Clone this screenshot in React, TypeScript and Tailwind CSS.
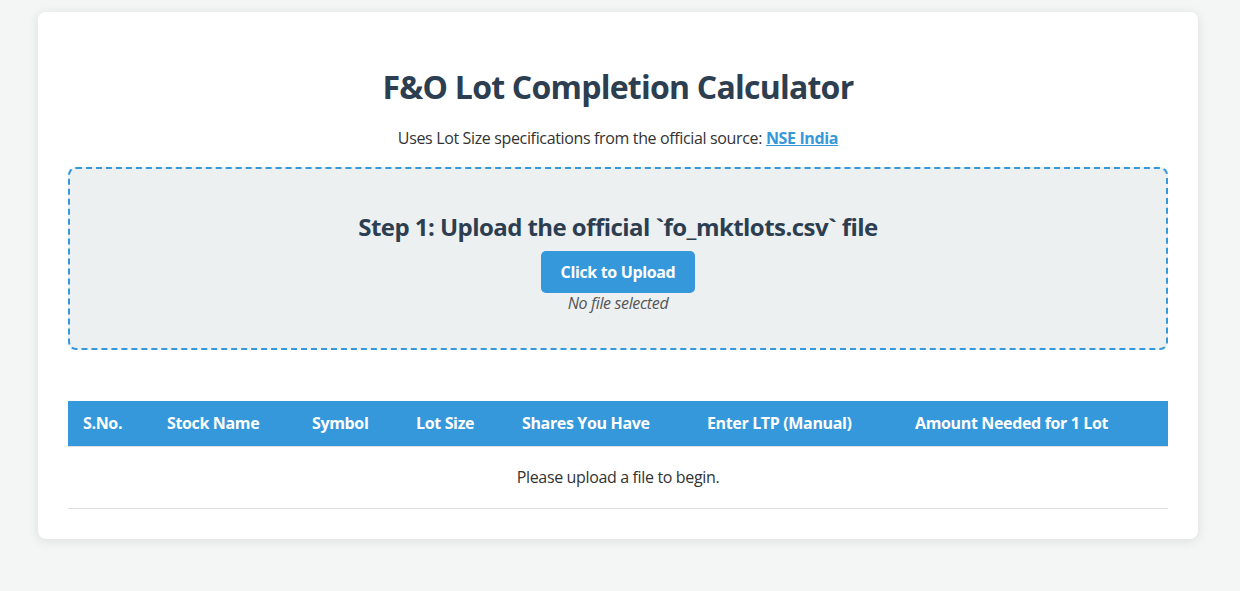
import React from "react";

const cols = [
  { label: "S.No.", w: "w-[84px]" },
  { label: "Stock Name", w: "w-[145px]" },
  { label: "Symbol", w: "w-[104px]" },
  { label: "Lot Size", w: "w-[106px]" },
  { label: "Shares You Have", w: "w-[185px]" },
  { label: "Enter LTP (Manual)", w: "w-[208px]" },
  { label: "Amount Needed for 1 Lot", w: "w-[268px]" },
];

export default function App() {
  return (
    <div className="min-h-[591px] bg-[#f4f5f5] pt-3 pb-12 font-['Open_Sans',sans-serif] tracking-[-0.022em] text-[#333]">
      <div className="ml-[38px] w-[1160px] rounded-lg bg-white p-[30px] shadow-[0_2px_12px_rgba(0,0,0,0.1)]">
        <h1 className="mt-[24px] text-center text-[32px] font-bold leading-[42px] tracking-[-0.024em] text-[#2c3e50]">
          F&amp;O Lot Completion Calculator
        </h1>
        <p className="mt-[20px] text-center text-[16px] leading-[21px]">
          Uses Lot Size specifications from the official source:{" "}
          <a href="#" className="font-bold text-[#3498db] underline">
            NSE India
          </a>
        </p>

        <div className="mt-[18px] flex h-[183px] flex-col items-center rounded-lg border-2 border-dashed border-[#3498db] bg-[#ecf0f1] pt-[42px]">
          <h2 className="text-[24px] font-bold leading-[32px] tracking-[-0.023em] text-[#2c3e50]">
            Step 1: Upload the official `fo_mktlots.csv` file
          </h2>
          <button className="mt-[8px] rounded-[5px] bg-[#3498db] px-5 py-[10px] text-[16px] font-bold leading-[22px] text-white">
            Click to Upload
          </button>
          <div className="text-[16px] italic leading-[21px] text-[#555]">No file selected</div>
        </div>

        <table className="mt-[51px] w-full border-collapse text-[16px] leading-[21px]">
          <thead>
            <tr className="bg-[#3498db] text-left text-white">
              {cols.map((c) => (
                <th key={c.label} className={`${c.w} border-b border-[#ddd] px-[15px] py-[12px] font-bold`}>
                  {c.label}
                </th>
              ))}
            </tr>
          </thead>
          <tbody>
            <tr>
              <td colSpan={7} className="border-b border-[#ddd] py-[20px] text-center">
                Please upload a file to begin.
              </td>
            </tr>
          </tbody>
        </table>
      </div>
    </div>
  );
}
